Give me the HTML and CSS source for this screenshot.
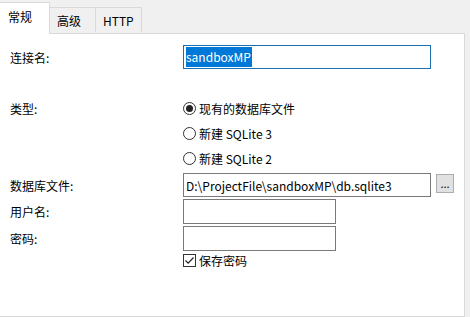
FILE: index.html
```html
<!DOCTYPE html>
<html lang="zh-CN">

<head>
    <meta charset="UTF-8">
    <title>连接</title>
    <link rel="stylesheet" href="styles.css">
</head>

<body>
    <div class="tabs">
        <div class="tab active">常规</div>
        <div class="tab">高级</div>
        <div class="tab">HTTP</div>
    </div>
    <div class="panel">
        <div class="row first">
            <div class="label">连接名:</div>
            <div class="input wide focused"><span class="selected">sandboxMP</span></div>
        </div>
        <div class="row radio-row type-row">
            <div class="label">类型:</div>
            <div class="option"><span class="radio checked"></span>现有的数据库文件</div>
        </div>
        <div class="row radio-row">
            <div class="label"></div>
            <div class="option"><span class="radio"></span>新建 SQLite 3</div>
        </div>
        <div class="row radio-row">
            <div class="label"></div>
            <div class="option"><span class="radio"></span>新建 SQLite 2</div>
        </div>
        <div class="row file-row">
            <div class="label">数据库文件:</div>
            <div class="input wide">D:\ProjectFile\sandboxMP\db.sqlite3</div>
            <button class="browse">...</button>
        </div>
        <div class="row small-row">
            <div class="label">用户名:</div>
            <div class="input short"></div>
        </div>
        <div class="row small-row">
            <div class="label">密码:</div>
            <div class="input short"></div>
        </div>
        <div class="row check-row">
            <div class="label"></div>
            <div class="option">
                <span class="checkbox">
                    <svg width="11" height="11" viewBox="0 0 11 11">
                        <path d="M1.5 5.5 L4.2 8.2 L9.5 2.5" fill="none" stroke="#222" stroke-width="1.2"/>
                    </svg>
                </span>保存密码
            </div>
        </div>
    </div>
</body>

</html>
```

FILE: styles.css
```css
body {
    margin: 0;
    height: 317px;
    background-color: #f0f0f0;
    font-family: "Noto Sans CJK SC", "Noto Sans", sans-serif;
    font-size: 12px;
    color: #000;
    display: flex;
    flex-direction: column;
    overflow: hidden;
}
.tabs {
    display: flex;
    align-items: flex-end;
    height: 33px;
}
.tab {
    box-sizing: border-box;
    height: 25px;
    padding: 0 7px;
    border: 1px solid #d9d9d9;
    border-bottom: none;
    border-left: none;
    background-color: #f0f0f0;
    display: flex;
    align-items: center;
    width: 46px;
    margin-bottom: 1px;
}
.tab.active {
    background-color: #fff;
    height: 32px;
    width: 50px;
    padding: 0 8px 4px;
    margin-bottom: -1px;
    position: relative;
    z-index: 1;
}
.panel {
    flex: 1;
    margin-right: 5px;
    background-color: #fff;
    border: 1px solid #d9d9d9;
    border-left: none;
    padding-top: 11px;
}
.row {
    display: flex;
    align-items: center;
}
.label {
    width: 173px;
    padding-left: 10px;
    flex-shrink: 0;
}
.input {
    box-sizing: border-box;
    height: 24px;
    border: 1px solid #7a7a7a;
    background-color: #fff;
    padding: 0 2px;
    display: flex;
    align-items: center;
    white-space: nowrap;
}
.input.wide {
    width: 248px;
}
.input.short {
    width: 153px;
}
.input.focused {
    border-color: #1a6fb3;
}
.selected {
    background-color: #0078d7;
    color: #fff;
    padding: 1px 1px 2px 0;
}
.type-row {
    margin-top: 29px;
}
.radio-row {
    height: 20px;
    margin-bottom: 5px;
}
.option {
    display: flex;
    align-items: center;
}
.radio {
    box-sizing: border-box;
    width: 13px;
    height: 13px;
    border: 1px solid #333;
    border-radius: 50%;
    margin-right: 3px;
    display: flex;
    align-items: center;
    justify-content: center;
}
.radio.checked::after {
    content: "";
    width: 7px;
    height: 7px;
    border-radius: 50%;
    background-color: #222;
}
.file-row {
    margin-top: 1px;
}
.browse {
    box-sizing: border-box;
    margin-left: 5px;
    width: 18px;
    height: 19px;
    padding: 0;
    border: 1px solid #adadad;
    background-color: #e1e1e1;
    font-family: "Noto Sans CJK SC", sans-serif;
    font-size: 11px;
    line-height: 1;
    align-self: flex-start;
    margin-top: 1px;
}
.small-row {
    margin-top: 2px;
}
.small-row .input {
    height: 25px;
}
.check-row {
    margin-top: 1px;
}
.checkbox {
    box-sizing: border-box;
    width: 13px;
    height: 13px;
    border: 1px solid #333;
    margin-right: 3px;
    display: flex;
    align-items: center;
    justify-content: center;
}
```
